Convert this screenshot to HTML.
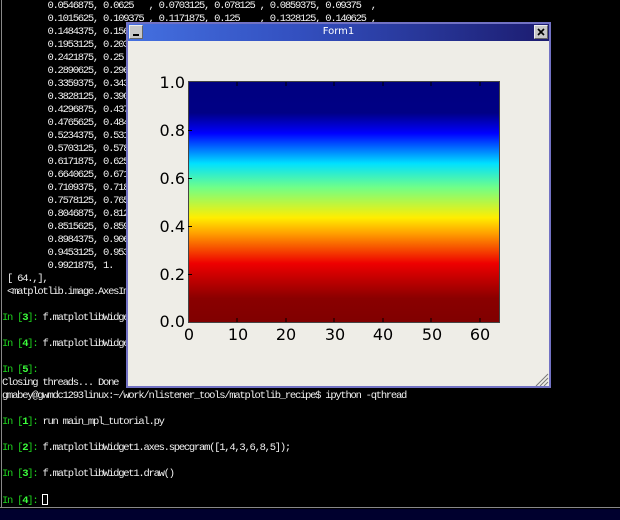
<!DOCTYPE html>
<html><head><style>
html,body{margin:0;padding:0;width:620px;height:520px;overflow:hidden;background:#000;}
#term{position:absolute;left:0;top:0;width:620px;height:508px;background:#000;}
#lborder{position:absolute;left:1px;top:0;width:1px;height:508px;background:#888;}
#bborder{position:absolute;left:0;top:507px;width:620px;height:1px;background:#888;}
#task{position:absolute;left:0;top:509px;width:620px;height:11px;background:#00002e;}
pre{position:absolute;left:2px;top:0px;margin:0;font-family:"Liberation Mono",monospace;font-size:10.5px;letter-spacing:-1.25px;line-height:13px;color:#f0f0f0;white-space:pre;}
.g{color:#1ed41e}.G{color:#3cff3c;font-weight:bold}
.cur{display:inline-block;width:6px;height:11px;border:1px solid #fff;box-sizing:border-box;vertical-align:-2px;}
#win{position:absolute;left:126px;top:22px;width:425px;height:366px;background:#7272c4;}
#title{position:absolute;left:2px;top:2px;width:421px;height:17px;background:linear-gradient(to right,#4470e0,#3350c0 40%,#1c1c70);}
#title span{position:absolute;left:0;width:100%;text-align:center;top:2px;color:#fff;font-family:"DejaVu Sans",sans-serif;font-size:10px;}
.btn{position:absolute;top:1px;width:14px;height:14px;background:#c8c8c8;border:1px solid #eee;border-right-color:#666;border-bottom-color:#666;box-sizing:border-box;}
#content{position:absolute;left:2px;top:19px;width:421px;height:345px;background:#eeede7;}
</style></head><body>
<div id="term"></div>
<div id="lborder"></div>
<pre>         0.0546875, 0.0625   , 0.0703125, 0.078125 , 0.0859375, 0.09375  ,
         0.1015625, 0.109375 , 0.1171875, 0.125    , 0.1328125, 0.140625 ,
         0.1484375, 0.15625
         0.1953125, 0.203125
         0.2421875, 0.25
         0.2890625, 0.296875
         0.3359375, 0.34375
         0.3828125, 0.390625
         0.4296875, 0.4375
         0.4765625, 0.484375
         0.5234375, 0.53125
         0.5703125, 0.578125
         0.6171875, 0.625
         0.6640625, 0.671875
         0.7109375, 0.71875
         0.7578125, 0.765625
         0.8046875, 0.8125
         0.8515625, 0.859375
         0.8984375, 0.90625
         0.9453125, 0.953125
         0.9921875, 1.       
 [ 64.,],
 &lt;matplotlib.image.AxesImage

<span class="g">In [</span><span class="G">3</span><span class="g">]:</span> f.matplotlibWidget1

<span class="g">In [</span><span class="G">4</span><span class="g">]:</span> f.matplotlibWidget1

<span class="g">In [</span><span class="G">5</span><span class="g">]:</span>
Closing threads... Done
gmabey@gwmdc1293linux:~/work/nlistener_tools/matplotlib_recipe$ ipython -qthread

<span class="g">In [</span><span class="G">1</span><span class="g">]:</span> run main_mpl_tutorial.py

<span class="g">In [</span><span class="G">2</span><span class="g">]:</span> f.matplotlibWidget1.axes.specgram([1,4,3,6,8,5]);

<span class="g">In [</span><span class="G">3</span><span class="g">]:</span> f.matplotlibWidget1.draw()

<span class="g">In [</span><span class="G">4</span><span class="g">]:</span> <span class="cur"></span></pre>
<div id="bborder"></div>
<div id="task"></div>
<div id="win">
 <div id="title"><span>Form1</span>
  <div class="btn" style="left:1px"><div style="position:absolute;left:3px;top:8px;width:6px;height:2px;background:#000"></div></div>
  <div class="btn" style="right:1px"><svg width="12" height="12" style="position:absolute;left:0;top:0"><path d="M3 3L9 9M9 3L3 9" stroke="#000" stroke-width="1.6"/></svg></div>
 </div>
 <div id="content">
  <svg width="421" height="345" style="position:absolute;left:0;top:0" font-family="DejaVu Sans, sans-serif" font-size="16">
   <defs><linearGradient id="jet" x1="0" y1="0" x2="0" y2="1">
    <stop offset="0" stop-color="#000080"/><stop offset="0.13" stop-color="#000085"/>
    <stop offset="0.215" stop-color="#0000ff"/><stop offset="0.34" stop-color="#00e0ff"/>
    <stop offset="0.44" stop-color="#70ff88"/><stop offset="0.565" stop-color="#ffee00"/>
    <stop offset="0.63" stop-color="#ffa000"/><stop offset="0.755" stop-color="#ee0000"/>
    <stop offset="0.9" stop-color="#8a0000"/><stop offset="1" stop-color="#800000"/>
   </linearGradient></defs>
   <rect x="60.5" y="40.5" width="311" height="241" fill="url(#jet)" stroke="#444" stroke-width="1"/>
   <g stroke="#000" stroke-width="1">
    <path d="M60 233.5h4M60 185.5h4M60 137.5h4M60 89.5h4"/>
    <path d="M109 281v-4M158 281v-4M206 281v-4M255 281v-4M303 281v-4M352 281v-4"/>
    <path d="M109 41v4M158 41v4M206 41v4M255 41v4M303 41v4M352 41v4"/>
   </g>
   <g text-anchor="end">
    <text x="57" y="47">1.0</text><text x="57" y="95">0.8</text><text x="57" y="143">0.6</text>
    <text x="57" y="191">0.4</text><text x="57" y="239">0.2</text><text x="57" y="286">0.0</text>
   </g>
   <g text-anchor="middle">
    <text x="61" y="299">0</text><text x="110" y="299">10</text><text x="158" y="299">20</text>
    <text x="207" y="299">30</text><text x="255" y="299">40</text><text x="304" y="299">50</text><text x="352" y="299">60</text>
   </g>
   <path d="M420 333L408 345M420 337L412 345M420 341L416 345" stroke="#777" stroke-width="1"/>
  </svg>
 </div>
</div>
</body></html>
